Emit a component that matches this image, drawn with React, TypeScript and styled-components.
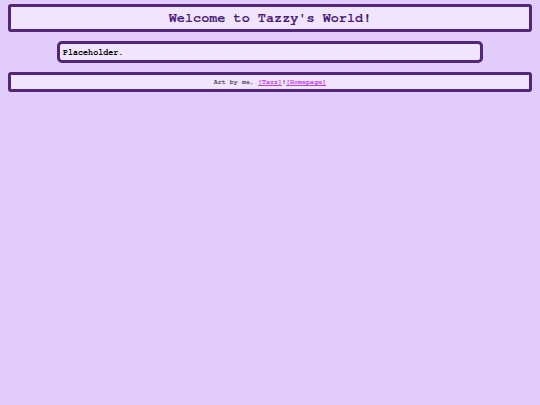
import styled, { createGlobalStyle } from 'styled-components'

const GlobalStyle = createGlobalStyle`
    html, body {
        margin: 0;
        padding: 0;
        background: #e3cdfd;
        min-height: 100%;
    }
    body {
        font-family: "Nimbus Mono PS", "Nimbus Mono L", FreeMono, "Courier New", "Liberation Mono", monospace;
    }
`

const App = () => {
    return (
        <>
            <GlobalStyle />
            <Page>
                <Header>Welcome to Tazzy's World!</Header>
                <Content>Placeholder.</Content>
                <Footer>
                    Art by me, <FooterLink href="#">[Tazz]</FooterLink>!<FooterLink href="#">[Homepage]</FooterLink>
                </Footer>
            </Page>
        </>
    )
}

export default App

const Page = styled.div`
    display: flex;
    flex-direction: column;
    align-items: center;
    gap: 9px;
    padding: 4px 8px;
    min-height: 397px;
`

const Box = styled.div`
    box-sizing: border-box;
    background: #f1e5fd;
    border: 3px solid #52267a;
    border-radius: 3px;
`

const Header = styled(Box)`
    width: 100%;
    height: 28px;
    display: flex;
    align-items: center;
    justify-content: center;
    color: #4a1c78;
    font-weight: 700;
    font-size: 13.5px;
`

const Content = styled(Box)`
    width: 426px;
    height: 22px;
    border-radius: 5px;
    display: flex;
    align-items: center;
    padding: 0 3px;
    color: #000;
    font-weight: 700;
    font-size: 8.4px;
`

const Footer = styled(Box)`
    width: 100%;
    height: 20px;
    display: flex;
    align-items: center;
    justify-content: center;
    color: #54486a;
    font-weight: 700;
    font-size: 6.7px;
    white-space: pre;
`

const FooterLink = styled.a`
    color: #c040e0;
    text-decoration: underline;
`
